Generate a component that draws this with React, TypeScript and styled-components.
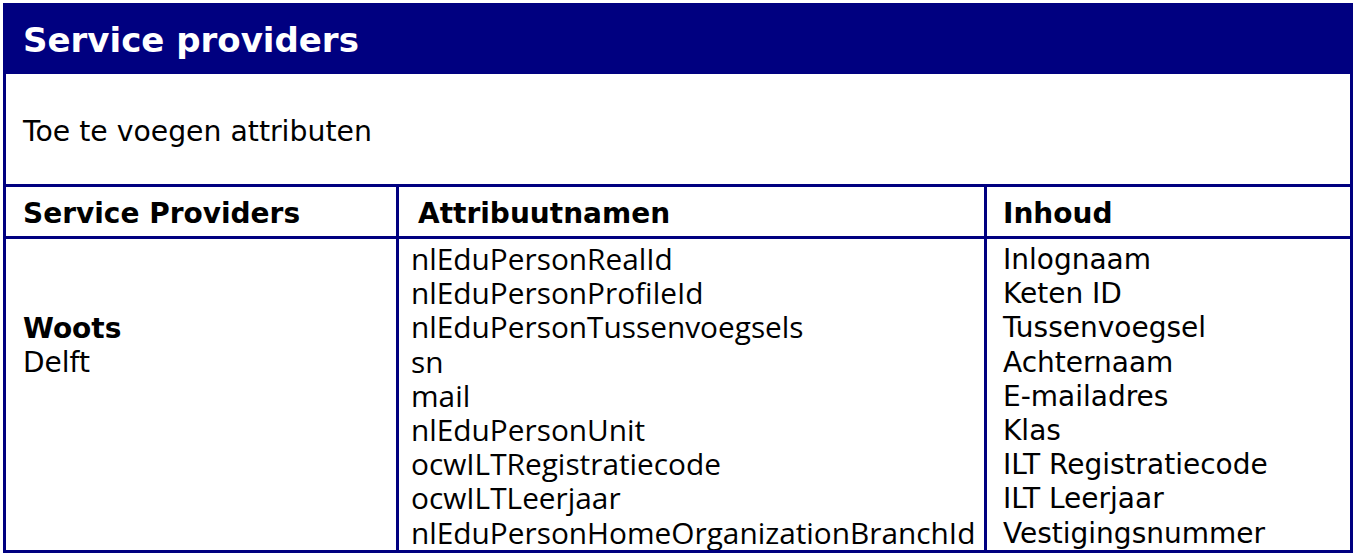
import React from "react";
import styled, { createGlobalStyle } from "styled-components";

const GlobalStyle = createGlobalStyle`
  html, body { margin: 0; padding: 0; background: #ffffff; }
  body { font-family: "DejaVu Sans", Verdana, sans-serif; color: #000; }
`;

const NAVY = "#000080";

const Frame = styled.div`
  margin: 3px 0 0 3px;
  width: 1350px;
  height: 550px;
  box-sizing: border-box;
  border: 3px solid ${NAVY};
  display: flex;
  flex-direction: column;
  overflow: hidden;
`;

const TitleBar = styled.h1`
  margin: 0;
  height: 68px;
  flex: none;
  background: ${NAVY};
  color: #ffffff;
  font-family: "DejaVu Sans", Verdana, sans-serif;
  font-weight: bold;
  font-size: 34px;
  display: flex;
  align-items: center;
  padding: 0 0 0 17px;
  box-sizing: border-box;
`;

const Intro = styled.p`
  margin: 0;
  height: 110px;
  flex: none;
  font-size: 28.3px;
  display: flex;
  align-items: center;
  padding: 5px 0 0 17px;
  box-sizing: border-box;
`;

const Grid = styled.div`
  flex: 1;
  display: grid;
  grid-template-columns: 390px 585px 1fr;
  grid-template-rows: 49px 1fr;
  gap: 3px;
  background: ${NAVY};
  border-top: 3px solid ${NAVY};
  min-height: 0;
`;

const HeadCell = styled.div<{ $pad: number }>`
  background: #ffffff;
  font-weight: bold;
  font-size: 28px;
  display: flex;
  align-items: center;
  padding-left: ${(p) => p.$pad}px;
  padding-top: 3px;
  box-sizing: border-box;
`;

const BodyCell = styled.div<{ $pad: number; $top: number; $alt?: boolean }>`
  background: #ffffff;
  padding-left: ${(p) => p.$pad}px;
  padding-top: ${(p) => p.$top}px;
  font-size: ${(p) => (p.$alt ? "29.8px" : "28px")};
  line-height: 34.2px;
  font-family: ${(p) =>
    p.$alt ? `"Open Sans", "Noto Sans", sans-serif` : `"DejaVu Sans", Verdana, sans-serif`};
  white-space: nowrap;
  box-sizing: border-box;
  min-height: 0;
`;

const Line = styled.div<{ $bold?: boolean }>`
  font-weight: ${(p) => (p.$bold ? "bold" : "normal")};
  height: 34.2px;
`;

const attributes = [
  "nlEduPersonRealId",
  "nlEduPersonProfileId",
  "nlEduPersonTussenvoegsels",
  "sn",
  "mail",
  "nlEduPersonUnit",
  "ocwILTRegistratiecode",
  "ocwILTLeerjaar",
  "nlEduPersonHomeOrganizationBranchId",
];

const contents = [
  "Inlognaam",
  "Keten ID",
  "Tussenvoegsel",
  "Achternaam",
  "E-mailadres",
  "Klas",
  "ILT Registratiecode",
  "ILT Leerjaar",
  "Vestigingsnummer",
];

export default function App() {
  return (
    <>
      <GlobalStyle />
      <Frame>
        <TitleBar>Service providers</TitleBar>
        <Intro>Toe te voegen attributen</Intro>
        <Grid>
          <HeadCell $pad={17}>Service Providers</HeadCell>
          <HeadCell $pad={19}>Attribuutnamen</HeadCell>
          <HeadCell $pad={16}>Inhoud</HeadCell>
          <BodyCell $pad={17} $top={73}>
            <Line $bold>Woots</Line>
            <Line>Delft</Line>
          </BodyCell>
          <BodyCell $pad={12} $top={3} $alt>
            {attributes.map((a) => (
              <Line key={a}>{a}</Line>
            ))}
          </BodyCell>
          <BodyCell $pad={16} $top={4}>
            {contents.map((c) => (
              <Line key={c}>{c}</Line>
            ))}
          </BodyCell>
        </Grid>
      </Frame>
    </>
  );
}
